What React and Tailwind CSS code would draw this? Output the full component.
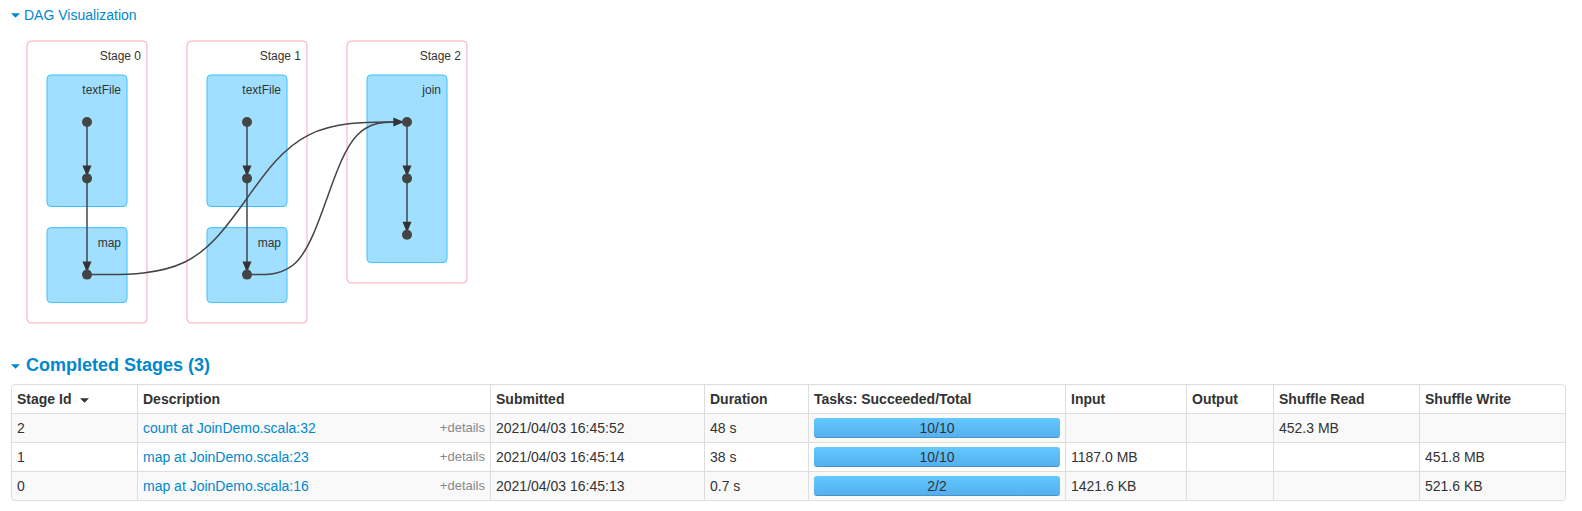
import React from "react";

const NODE_R = 5;
const TOP = 122;
const MID = 178.4;
const LOW = 274.6;

const columns = [
  { label: "Description", width: "w-[353px]" },
  { label: "Submitted", width: "w-[214px]" },
  { label: "Duration", width: "w-[104px]" },
  { label: "Tasks: Succeeded/Total", width: "w-[257px]" },
  { label: "Input", width: "w-[121px]" },
  { label: "Output", width: "w-[87px]" },
  { label: "Shuffle Read", width: "w-[146px]" },
  { label: "Shuffle Write", width: "w-[146px]" },
];

const stages = [
  { id: 2, name: "count at JoinDemo.scala:32", submitted: "2021/04/03 16:45:52", duration: "48 s", done: 10, total: 10, input: "", output: "", read: "452.3 MB", write: "" },
  { id: 1, name: "map at JoinDemo.scala:23", submitted: "2021/04/03 16:45:14", duration: "38 s", done: 10, total: 10, input: "1187.0 MB", output: "", read: "", write: "451.8 MB" },
  { id: 0, name: "map at JoinDemo.scala:16", submitted: "2021/04/03 16:45:13", duration: "0.7 s", done: 2, total: 2, input: "1421.6 KB", output: "", read: "", write: "521.6 KB" },
];

function Caret({ className }) {
  return (
    <svg width="9" height="5" viewBox="0 0 9 5" className={className} aria-hidden="true">
      <path d="M0 0.2H9L4.5 4.8Z" fill="currentColor" />
    </svg>
  );
}

function StageBox({ x, height, label }) {
  return (
    <g>
      <rect x={x} y="41" width="120" height={height} rx="4" fill="#fff" stroke="#ffa6b6" />
      <text x={x + 114} y="60" textAnchor="end">{label}</text>
    </g>
  );
}

function OpBox({ x, y, height, label }) {
  return (
    <g>
      <rect x={x} y={y} width="80" height={height} rx="4" fill="#a0dfff" stroke="#3ec0ff" />
      <text x={x + 74} y={y + 19} textAnchor="end">{label}</text>
    </g>
  );
}

function DownEdge({ x, from, to }) {
  const tip = to - NODE_R + 1;
  return (
    <g>
      <path d={`M${x} ${from}V${tip - 6}`} stroke="#444" strokeWidth="1.5" />
      <path d={`M${x - 4.5} ${tip - 9}H${x + 4.5}L${x + 0.8} ${tip}H${x - 0.8}Z`} fill="#333" />
    </g>
  );
}

function Dag() {
  const nodes = [
    [87, TOP], [87, MID], [87, LOW],
    [247, TOP], [247, MID], [247, LOW],
    [407, TOP], [407, MID], [407, 234.7],
  ];
  return (
    <svg
      width="480"
      height="330"
      viewBox="0 28 480 330"
      fill="none"
      role="img"
      aria-label="DAG of stages"
      className="block font-['Liberation_Sans',Arial,sans-serif] text-[12px] [&_text]:fill-[#333]"
    >
      <StageBox x={27} height={282} label="Stage 0" />
      <StageBox x={187} height={282} label="Stage 1" />
      <StageBox x={347} height={242} label="Stage 2" />
      <OpBox x={47} y={75} height={131.5} label="textFile" />
      <OpBox x={47} y={227.6} height={75} label="map" />
      <OpBox x={207} y={75} height={131.5} label="textFile" />
      <OpBox x={207} y={227.6} height={75} label="map" />
      <OpBox x={367} y={75} height={187.6} label="join" />

      <DownEdge x={87} from={TOP} to={MID} />
      <DownEdge x={87} from={MID} to={LOW} />
      <DownEdge x={247} from={TOP} to={MID} />
      <DownEdge x={247} from={MID} to={LOW} />
      <DownEdge x={407} from={TOP} to={MID} />
      <DownEdge x={407} from={MID} to={234.7} />

      <path
        d="M92 274.5H109C125.5 274.5 159 274.5 185 262C211 249 229 223.5 247 198.3C265 173 283 147.5 309 134.8C335 122 368.5 122 385 122H395"
        stroke="#444"
        strokeWidth="1.5"
      />
      <path
        d="M252 274.5H260C268 274.5 284 274.5 296.5 262C309 249 318 223.5 327 198.3C336 173 345 147.5 357.5 134.8C370 122 386 122 394 122H395"
        stroke="#444"
        strokeWidth="1.5"
      />
      <path d="M393.3 117.5V126.5L402.3 122.8V121.2Z" fill="#333" />

      {nodes.map(([x, y]) => (
        <circle key={`${x}-${y}`} cx={x} cy={y} r={NODE_R} fill="#444" />
      ))}
    </svg>
  );
}

const cell = "border-l border-t border-[#ddd] px-[5px] py-1 text-left";

export default function App() {
  return (
    <main className="bg-white pb-3 pl-[11px] pr-4 pt-[5px] font-['Liberation_Sans',Arial,sans-serif] text-[14px] leading-5 text-[#333]">
      <button type="button" className="flex items-center gap-1 text-[#08c]">
        <Caret className="mt-px" />
        <span>DAG Visualization</span>
      </button>

      <div className="-ml-[11px] mt-[3px] overflow-x-auto">
        <Dag />
      </div>

      <h4 className="mt-[-3px] text-[18px] font-bold">
        <button type="button" className="flex items-center gap-[6px] text-[#08c]">
          <Caret className="mt-[2px]" />
          <span>Completed Stages (3)</span>
        </button>
      </h4>

      <table className="mt-[9px] w-full table-fixed border-separate border-spacing-0 overflow-hidden rounded-[4px] border-b border-r border-[#ddd]">
        <thead>
          <tr>
            <th scope="col" className={`${cell} w-[126px] rounded-tl-[4px]`}>
              <button type="button" className="flex items-center gap-[9px] font-bold">
                Stage Id
                <Caret className="mt-[2px]" />
              </button>
            </th>
            {columns.map((c, i) => (
              <th
                key={c.label}
                scope="col"
                className={`${cell} ${c.width} ${i === columns.length - 1 ? "rounded-tr-[4px]" : ""}`}
              >
                {c.label}
              </th>
            ))}
          </tr>
        </thead>
        <tbody>
          {stages.map((s, i) => (
            <tr key={s.id} className="odd:bg-[#f9f9f9]">
              <td className={`${cell} ${i === stages.length - 1 ? "rounded-bl-[4px]" : ""}`}>{s.id}</td>
              <td className={cell}>
                <div className="flex justify-between">
                  <a href="#stage" className="text-[#08c]">{s.name}</a>
                  <button type="button" className="text-[13px] leading-5 text-[#888]">+details</button>
                </div>
              </td>
              <td className={cell}>{s.submitted}</td>
              <td className={cell}>{s.duration}</td>
              <td className={cell}>
                <div className="h-5 overflow-hidden rounded-[3px]">
                  <div
                    className="h-full bg-linear-to-b from-[#64c8ff] to-[#54aeed] text-center shadow-[inset_0_-1px_0_rgba(0,0,0,0.15)]"
                    style={{ width: `${(s.done / s.total) * 100}%` }}
                  >
                    {s.done}/{s.total}
                  </div>
                </div>
              </td>
              <td className={cell}>{s.input}</td>
              <td className={cell}>{s.output}</td>
              <td className={cell}>{s.read}</td>
              <td className={cell}>{s.write}</td>
            </tr>
          ))}
        </tbody>
      </table>
    </main>
  );
}
